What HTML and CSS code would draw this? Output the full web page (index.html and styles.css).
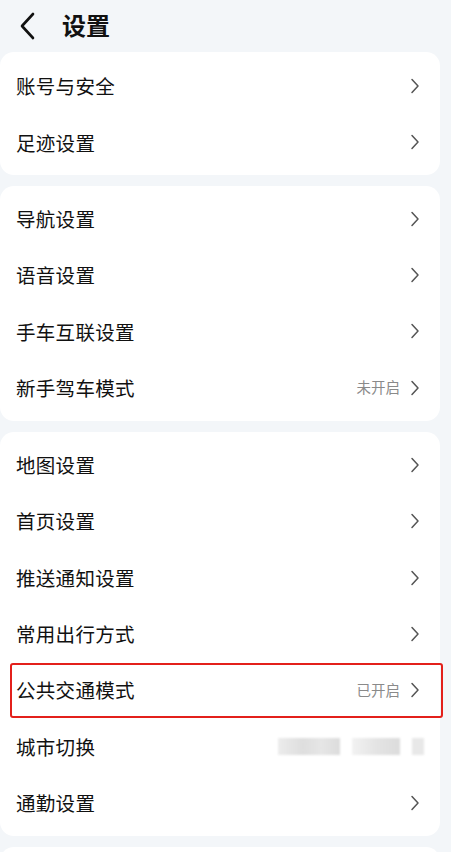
FILE: index.html
```html
<!DOCTYPE html>
<html lang="zh">
<head>
<meta charset="utf-8">
<link rel="stylesheet" href="styles.css">
</head>
<body>
<div class="page">
  <header class="header">
    <svg class="back" width="20" height="28" viewBox="0 0 20 28"><path d="M15 2 L4 14 L15 26" fill="none" stroke="#111" stroke-width="2.6" stroke-linecap="round" stroke-linejoin="round"/></svg>
    <h1 class="title">设置</h1>
  </header>

  <section class="card first">
    <div class="row"><span class="label">账号与安全</span><span class="right"><svg class="chev" width="10" height="16" viewBox="0 0 10 16"><path d="M2 1.5 L8 8 L2 14.5" fill="none" stroke="#555" stroke-width="1.5" stroke-linecap="round" stroke-linejoin="round"/></svg></span></div>
    <div class="row"><span class="label">足迹设置</span><span class="right"><svg class="chev" width="10" height="16" viewBox="0 0 10 16"><path d="M2 1.5 L8 8 L2 14.5" fill="none" stroke="#555" stroke-width="1.5" stroke-linecap="round" stroke-linejoin="round"/></svg></span></div>
  </section>

  <section class="card">
    <div class="row"><span class="label">导航设置</span><span class="right"><svg class="chev" width="10" height="16" viewBox="0 0 10 16"><path d="M2 1.5 L8 8 L2 14.5" fill="none" stroke="#555" stroke-width="1.5" stroke-linecap="round" stroke-linejoin="round"/></svg></span></div>
    <div class="row"><span class="label">语音设置</span><span class="right"><svg class="chev" width="10" height="16" viewBox="0 0 10 16"><path d="M2 1.5 L8 8 L2 14.5" fill="none" stroke="#555" stroke-width="1.5" stroke-linecap="round" stroke-linejoin="round"/></svg></span></div>
    <div class="row"><span class="label">手车互联设置</span><span class="right"><svg class="chev" width="10" height="16" viewBox="0 0 10 16"><path d="M2 1.5 L8 8 L2 14.5" fill="none" stroke="#555" stroke-width="1.5" stroke-linecap="round" stroke-linejoin="round"/></svg></span></div>
    <div class="row"><span class="label">新手驾车模式</span><span class="right"><span class="status">未开启</span><svg class="chev" width="10" height="16" viewBox="0 0 10 16"><path d="M2 1.5 L8 8 L2 14.5" fill="none" stroke="#555" stroke-width="1.5" stroke-linecap="round" stroke-linejoin="round"/></svg></span></div>
  </section>

  <section class="card">
    <div class="row"><span class="label">地图设置</span><span class="right"><svg class="chev" width="10" height="16" viewBox="0 0 10 16"><path d="M2 1.5 L8 8 L2 14.5" fill="none" stroke="#555" stroke-width="1.5" stroke-linecap="round" stroke-linejoin="round"/></svg></span></div>
    <div class="row"><span class="label">首页设置</span><span class="right"><svg class="chev" width="10" height="16" viewBox="0 0 10 16"><path d="M2 1.5 L8 8 L2 14.5" fill="none" stroke="#555" stroke-width="1.5" stroke-linecap="round" stroke-linejoin="round"/></svg></span></div>
    <div class="row"><span class="label">推送通知设置</span><span class="right"><svg class="chev" width="10" height="16" viewBox="0 0 10 16"><path d="M2 1.5 L8 8 L2 14.5" fill="none" stroke="#555" stroke-width="1.5" stroke-linecap="round" stroke-linejoin="round"/></svg></span></div>
    <div class="row"><span class="label">常用出行方式</span><span class="right"><svg class="chev" width="10" height="16" viewBox="0 0 10 16"><path d="M2 1.5 L8 8 L2 14.5" fill="none" stroke="#555" stroke-width="1.5" stroke-linecap="round" stroke-linejoin="round"/></svg></span></div>
    <div class="row highlighted"><span class="label">公共交通模式</span><span class="right"><span class="status">已开启</span><svg class="chev" width="10" height="16" viewBox="0 0 10 16"><path d="M2 1.5 L8 8 L2 14.5" fill="none" stroke="#555" stroke-width="1.5" stroke-linecap="round" stroke-linejoin="round"/></svg></span></div>
    <div class="row"><span class="label">城市切换</span><span class="right blurred"><span class="blur b1"></span><span class="blur b2"></span><span class="blur b3"></span></span></div>
    <div class="row"><span class="label">通勤设置</span><span class="right"><svg class="chev" width="10" height="16" viewBox="0 0 10 16"><path d="M2 1.5 L8 8 L2 14.5" fill="none" stroke="#555" stroke-width="1.5" stroke-linecap="round" stroke-linejoin="round"/></svg></span></div>
  </section>

  <section class="card last"></section>
</div>
</body>
</html>
```

FILE: styles.css
```css
* { box-sizing: border-box; }
html, body {
  margin: 0;
  padding: 0;
  background: #f3f6f9;
  font-family: "Noto Sans CJK SC", "Noto Sans", sans-serif;
  color: #111;
  overflow: hidden;
}
.page {
  width: 451px;
  height: 852px;
  display: flex;
  flex-direction: column;
  overflow: hidden;
}
.header {
  flex-shrink: 0;
  height: 52px;
  display: flex;
  align-items: center;
  padding: 0 0 1px 18px;
  gap: 24px;
}
.back { display: block; }
.title {
  margin: 0;
  font-size: 24px;
  font-weight: 700;
  line-height: 1.2;
}
.card {
  flex-shrink: 0;
  width: 440px;
  background: #fff;
  border-radius: 14px;
  padding: 5px 0;
  margin-bottom: 11px;
  display: flex;
  flex-direction: column;
}
.card.first { padding: 6px 0 4px; }
.card.last { height: 40px; }
.row {
  height: 56.3px;
  flex-shrink: 0;
  display: flex;
  align-items: center;
  justify-content: space-between;
  padding: 0 20px 0 16px;
  position: relative;
}
.label {
  font-size: 19.5px;
  line-height: 1;
  letter-spacing: 0.3px;
}
.right {
  display: flex;
  align-items: center;
  gap: 10px;
}
.status {
  font-size: 14.5px;
  color: #8a8a8a;
  line-height: 1;
}
.chev { display: block; }
.highlighted::after {
  content: "";
  position: absolute;
  left: 10px;
  right: -3px;
  top: 1px;
  bottom: 0;
  border: 2px solid #e3201b;
  border-radius: 3px;
}
.blurred { gap: 12px; margin-right: -4px; }
.blur {
  display: block;
  height: 17px;
  background: #e4e4e4;
  filter: blur(1px);
}
.b1 { width: 62px; background: linear-gradient(90deg, #ececec, #dedede 40%, #e6e6e6 70%, #dcdcdc); }
.b2 { width: 48px; background: linear-gradient(90deg, #f2f2f2, #e4e4e4 50%, #dcdcdc); }
.b3 { width: 12px; background: #e8e8e8; }
```
